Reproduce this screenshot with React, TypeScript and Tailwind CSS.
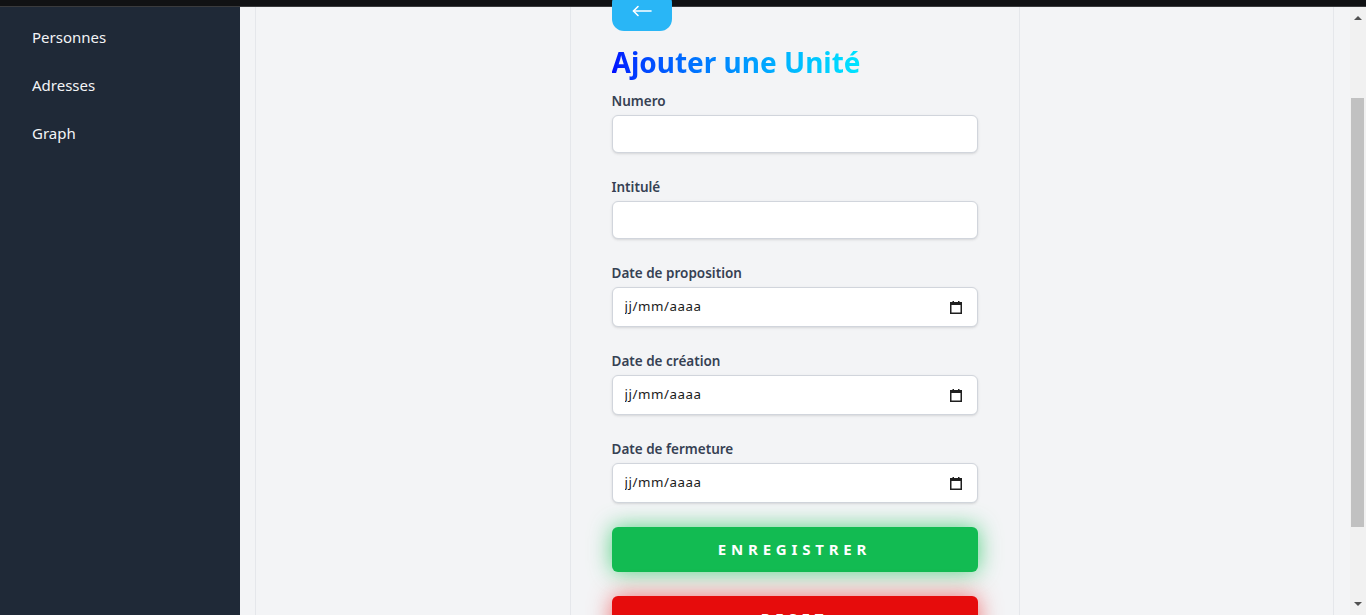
import React from 'react';

const font = { fontFamily: '"Noto Sans", "Open Sans", sans-serif' };

function CalendarIcon() {
  return (
    <svg width="12" height="13" viewBox="0 0 12 13" className="shrink-0">
      <rect x="0.75" y="1.75" width="10.5" height="10.5" fill="none" stroke="#1f1f1f" strokeWidth="1.5" />
      <rect x="0" y="1" width="12" height="3" fill="#1f1f1f" />
      <rect x="2.5" y="0" width="1.5" height="2" fill="#1f1f1f" />
      <rect x="8" y="0" width="1.5" height="2" fill="#1f1f1f" />
    </svg>
  );
}

function TextField({ label }: { label: string }) {
  return (
    <div className="mb-6">
      <label className="block text-[13.5px] leading-5 font-semibold text-gray-700">{label}</label>
      <input
        type="text"
        className="mt-1 block h-[38px] w-full rounded-md border border-gray-300 bg-white px-3 text-sm shadow-sm outline-none"
      />
    </div>
  );
}

function DateField({ label }: { label: string }) {
  return (
    <div className="mb-6">
      <label className="block text-[13.5px] leading-5 font-semibold text-gray-700">{label}</label>
      <div className="mt-1 flex h-10 w-full items-center rounded-md border border-gray-300 bg-white pl-3 pr-[15px] shadow-sm">
        <input
          type="text"
          placeholder="jj/mm/aaaa"
          className="min-w-0 flex-1 bg-transparent text-[13.33px] tracking-[0.04em] text-gray-900 outline-none placeholder:text-[#1a1a1a]"
        />
        <CalendarIcon />
      </div>
    </div>
  );
}

function Scrollbar() {
  return (
    <div className="flex w-4 shrink-0 flex-col bg-[#f1f1f1]">
      <div className="flex h-[17px] items-center justify-center pt-1">
        <svg width="8" height="5" viewBox="0 0 8 5">
          <path d="M0 5 L4 1 L8 5 Z" fill="#505050" />
        </svg>
      </div>
      <div className="mt-[74px] ml-px h-[429px] w-[13px] bg-[#c1c1c1]" />
      <div className="flex-1" />
      <div className="flex h-[17px] items-center justify-center pb-1">
        <svg width="8" height="5" viewBox="0 0 8 5">
          <path d="M0 0 L8 0 L4 4 Z" fill="#505050" />
        </svg>
      </div>
    </div>
  );
}

export default function App() {
  return (
    <div className="flex h-[615px] w-[1366px] flex-col overflow-hidden bg-gray-100" style={font}>
      {/* browser strip */}
      <div className="h-[7px] shrink-0 border-b border-[#3a3b3d] bg-[#111214]" />

      <div className="flex min-h-0 flex-1">
        {/* Sidebar */}
        <aside className="w-[240px] shrink-0 bg-[#1f2937] pt-1.5">
          <nav className="flex flex-col">
            {['Personnes', 'Adresses', 'Graph'].map((item) => (
              <a key={item} className="flex h-12 items-center px-8 text-[15px] text-gray-100">
                {item}
              </a>
            ))}
          </nav>
        </aside>

        {/* Main */}
        <main className="flex min-w-0 flex-1 pl-[15px] pr-4">
          <div className="flex flex-1 justify-center border-x border-gray-200">
            <div className="w-[450px] border-x border-gray-200 px-[41px]">
              <button className="-mt-4 flex h-10 w-[60px] items-center justify-center rounded-xl bg-[#29b6f6]">
                <svg width="20" height="12" viewBox="0 0 20 12" fill="none" stroke="white" strokeWidth="1.6" strokeLinecap="round">
                  <path d="M19 6 H2" />
                  <path d="M6 1.5 L1.5 6 L6 10.5" />
                </svg>
              </button>

              <h1 className="mt-[13px] mb-[11px] w-fit bg-gradient-to-r from-[#0008ff] to-[#00e5ff] bg-clip-text text-[28px] leading-9 font-bold text-transparent">
                Ajouter une Unité
              </h1>

              <form>
                <TextField label="Numero" />
                <TextField label="Intitulé" />
                <DateField label="Date de proposition" />
                <DateField label="Date de création" />
                <DateField label="Date de fermeture" />

                <button
                  type="button"
                  className="mb-6 flex h-[45px] w-full items-center justify-center rounded-md bg-[#12bb52] text-[15px] font-bold tracking-[0.32em] text-white shadow-[0_0_22px_rgba(34,197,94,0.75)]"
                >
                  ENREGISTRER
                </button>
                <button
                  type="button"
                  className="flex h-[45px] w-full items-center justify-center rounded-md bg-[#e60c0c] text-[15px] font-bold tracking-[0.32em] text-white shadow-[0_0_22px_rgba(239,68,68,0.75)]"
                >
                  RESET
                </button>
              </form>
            </div>
          </div>
        </main>

        <Scrollbar />
      </div>
    </div>
  );
}
